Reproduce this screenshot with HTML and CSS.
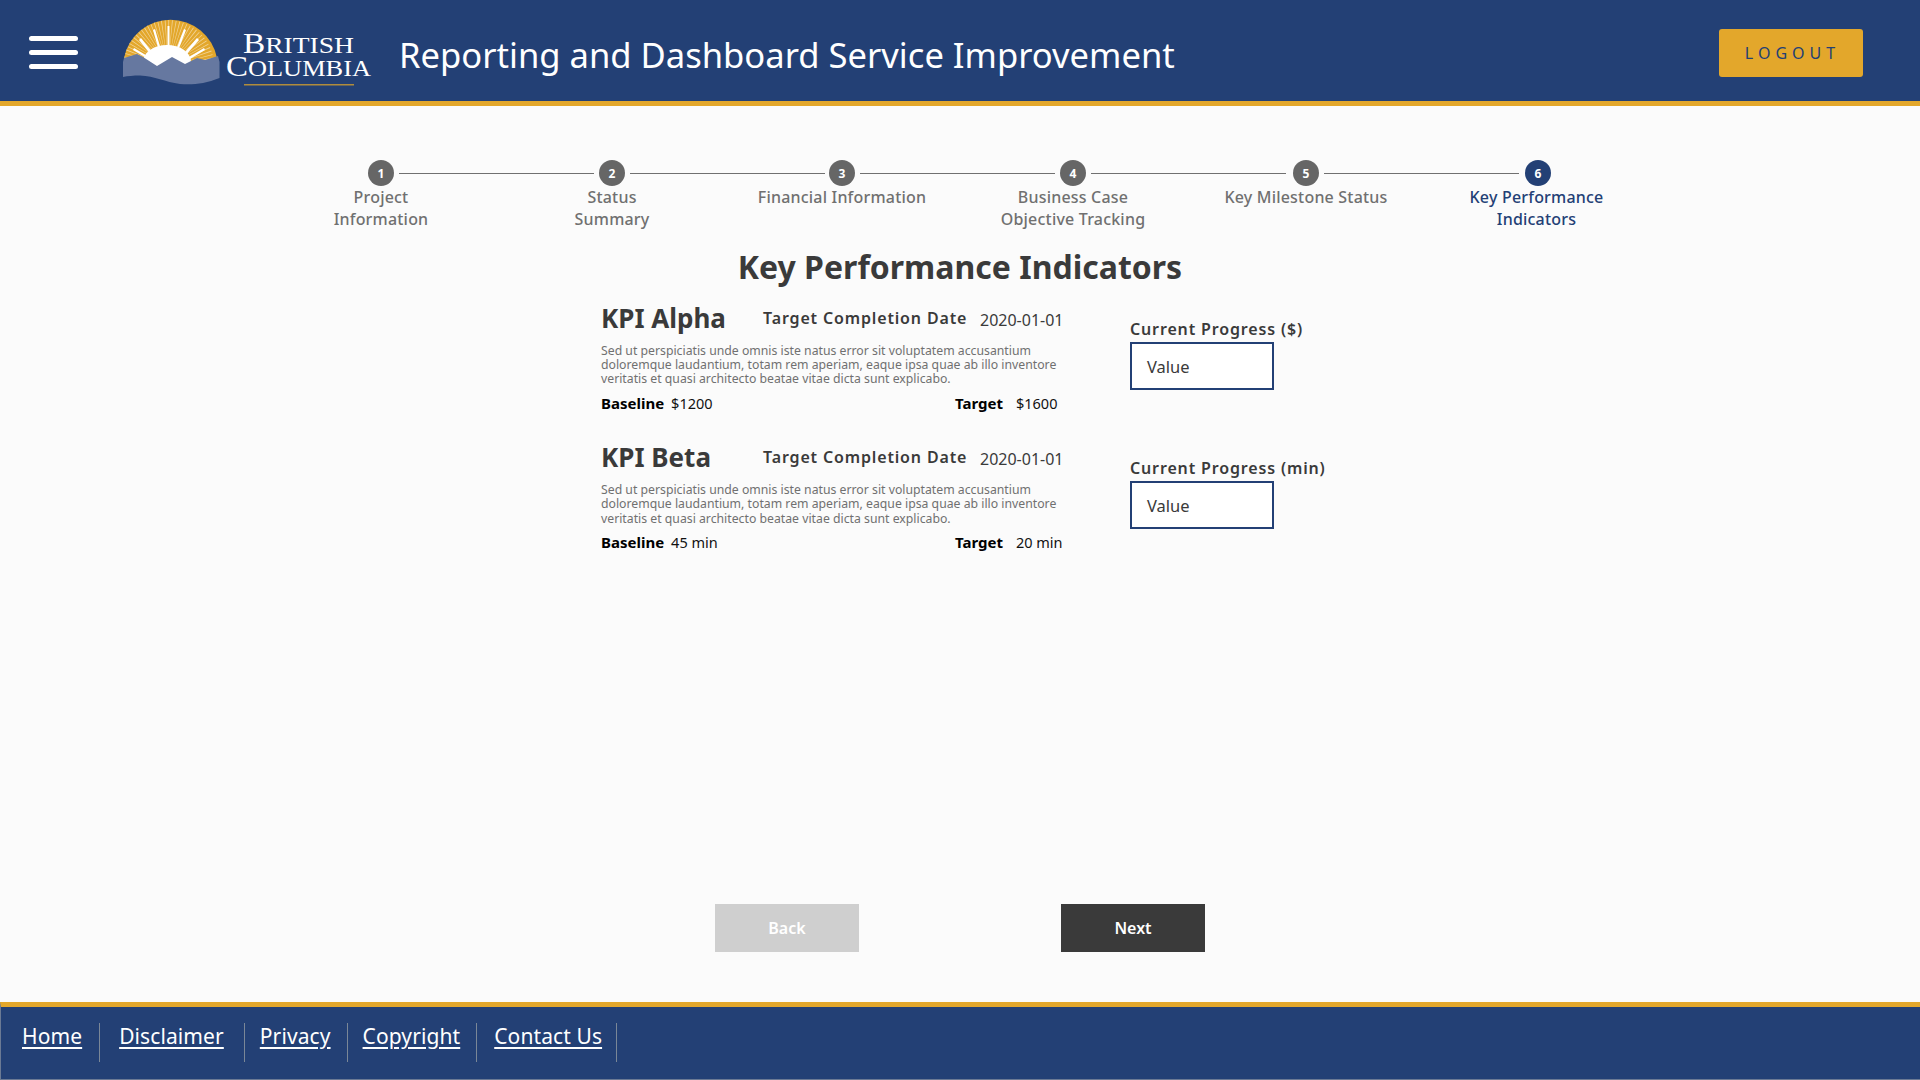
FILE: index.html
```html
<!DOCTYPE html>
<html lang="en">
<head>
<meta charset="utf-8">
<title>Reporting and Dashboard Service Improvement</title>
<link rel="stylesheet" href="styles.css">
</head>
<body>
<div class="page">
  <header class="header">
    <div class="menu" aria-label="Menu"><span></span><span></span><span></span></div>
    <svg class="logo" viewBox="120 15 260 75" width="260" height="75" aria-label="British Columbia">
      <defs><clipPath id="dome"><path d="M124 58 A47.4 47.4 0 0 1 217 58 L217 66 L124 66 Z"/></clipPath></defs>
      <path d="M124 58 A47.4 47.4 0 0 1 217 58 L217 66 L124 66 Z" fill="#e3a72b"/>
      <g clip-path="url(#dome)">
        <circle cx="168" cy="66" r="32" fill="none" stroke="#fff" stroke-width="28" stroke-dasharray="0.6 2" opacity=".5"/>
        <g fill="#fff">
          <path d="M167.500 26 L169.500 26 L169.500 50 L167.500 50 Z"/>
          <path d="M153 30 L155 29 L161 50 L159 51 Z"/>
          <path d="M184 29 L186 30 L178 51 L176 50 Z"/>
          <path d="M139 40 L141 38 L153 53 L151 55 Z"/>
          <path d="M197 38 L199 40 L186 55 L184 53 Z"/>
          <path d="M133 50 L134 48 L149 57 L148 59 Z"/>
          <path d="M204 48 L205 50 L190 59 L189 57 Z"/>
        </g>
      </g>
      <ellipse cx="167" cy="62" rx="24" ry="17" fill="#fff"/>
      <path d="M123 62 L124 58 L137 54 L143 57 L157 66 L172 57 L185 64 L197 58 L205 60 L218 56 L219.500 62 L219.500 78 C205 84 192 85 180 84 C165 82 155 76 140 75.500 C133 75.500 128 76 123 77 Z" fill="#6678a0"/>
      <text class="logo-text" x="243" y="52.500" textLength="111" lengthAdjust="spacingAndGlyphs"><tspan class="logo-cap">B</tspan>RITISH</text>
      <text class="logo-text" x="226" y="76" textLength="145" lengthAdjust="spacingAndGlyphs"><tspan class="logo-cap logo-cap-c">C</tspan>OLUMBIA</text>
      <rect x="244" y="84" width="110" height="1.500" fill="#b08c3c"/>
    </svg>
    <h1 class="app-title">Reporting and Dashboard Service Improvement</h1>
    <a class="logout">LOGOUT</a>
  </header>

  <main class="main">
    <ol class="stepper">
      <li class="step"><span class="dot">1</span><span class="step-label">Project<br>Information</span></li>
      <li class="step"><span class="dot">2</span><span class="step-label">Status<br>Summary</span></li>
      <li class="step"><span class="dot">3</span><span class="step-label">Financial Information</span></li>
      <li class="step"><span class="dot">4</span><span class="step-label">Business Case<br>Objective Tracking</span></li>
      <li class="step"><span class="dot">5</span><span class="step-label">Key Milestone Status</span></li>
      <li class="step current"><span class="dot">6</span><span class="step-label">Key Performance<br>Indicators</span></li>
    </ol>

    <h2 class="page-title">Key Performance Indicators</h2>

    <section class="kpi-list">
      <article class="kpi">
        <div class="kpi-info">
          <div class="kpi-head">
            <h3 class="kpi-name">KPI Alpha</h3>
            <span class="kpi-date-label">Target Completion Date</span>
            <span class="kpi-date">2020-01-01</span>
          </div>
          <p class="kpi-desc">Sed ut perspiciatis unde omnis iste natus error sit voluptatem accusantium doloremque laudantium, totam rem aperiam, eaque ipsa quae ab illo inventore veritatis et quasi architecto beatae vitae dicta sunt explicabo.</p>
          <div class="kpi-values">
            <span class="kpi-pair kpi-baseline"><b>Baseline</b> <span>$1200</span></span>
            <span class="kpi-pair kpi-target"><b>Target</b> <span>$1600</span></span>
          </div>
        </div>
        <label class="kpi-field">
          <span class="field-label">Current Progress ($)</span>
          <span class="field-box">Value</span>
        </label>
      </article>
      <article class="kpi">
        <div class="kpi-info">
          <div class="kpi-head">
            <h3 class="kpi-name">KPI Beta</h3>
            <span class="kpi-date-label">Target Completion Date</span>
            <span class="kpi-date">2020-01-01</span>
          </div>
          <p class="kpi-desc">Sed ut perspiciatis unde omnis iste natus error sit voluptatem accusantium doloremque laudantium, totam rem aperiam, eaque ipsa quae ab illo inventore veritatis et quasi architecto beatae vitae dicta sunt explicabo.</p>
          <div class="kpi-values">
            <span class="kpi-pair kpi-baseline"><b>Baseline</b> <span>45 min</span></span>
            <span class="kpi-pair kpi-target"><b>Target</b> <span>20 min</span></span>
          </div>
        </div>
        <label class="kpi-field">
          <span class="field-label">Current Progress (min)</span>
          <span class="field-box">Value</span>
        </label>
      </article>
    </section>

    <div class="actions">
      <button class="btn btn-back">Back</button>
      <button class="btn btn-next">Next</button>
    </div>
  </main>

  <footer class="footer">
    <nav class="footer-nav">
      <a class="f-home">Home</a>
      <a class="f-disclaimer">Disclaimer</a>
      <a class="f-privacy">Privacy</a>
      <a class="f-copyright">Copyright</a>
      <a class="f-contact">Contact Us</a>
    </nav>
  </footer>
</div>
</body>
</html>
```
FILE: styles.css
```css
* { box-sizing: border-box; }
html, body { margin: 0; padding: 0; }
body {
  font-family: "Noto Sans", "Open Sans", sans-serif;
  background: #fbfbfb;
  color: #3a3a3a;
}
.page {
  height: 1080px;
  display: flex;
  flex-direction: column;
}

/* Header */
.header {
  height: 106px;
  flex: none;
  background: #234075;
  border-bottom: 5px solid #e3a72b;
  display: flex;
  align-items: center;
  padding: 0 57px 0 29px;
}
.menu {
  width: 49px;
  display: flex;
  flex-direction: column;
  gap: 9px;
  margin-top: 4px;
  flex: none;
}
.menu span {
  display: block;
  height: 5px;
  border-radius: 3px;
  background: #fff;
}
.logo { flex: none; margin: 4px 0 0 42px; }
.logo-text {
  font-family: "Liberation Serif", serif;
  font-size: 24px;
  fill: #fff;
}
.logo-cap { font-size: 29px; }
.logo-cap-c { font-size: 30px; }
.app-title {
  margin: 8px 0 0 19px;
  font-size: 34.6px;
  font-weight: 400;
  color: #fff;
  line-height: 50px;
  flex: 1;
  white-space: nowrap;
}
.logout {
  width: 144px;
  height: 48px;
  margin-top: 5px;
  padding-left: 3px;
  background: #e3a72b;
  color: #234075;
  border-radius: 3px;
  font-size: 16px;
  letter-spacing: 5px;
  display: flex;
  align-items: center;
  justify-content: center;
}

/* Main */
.main {
  flex: 1;
  display: flex;
  flex-direction: column;
  align-items: center;
  padding-top: 54px;
  min-height: 0;
}
.stepper {
  list-style: none;
  margin: 0 0 0 -4px;
  padding: 0;
  display: grid;
  grid-template-columns: 231px 231px 229px 233px 233px 228px;
}
.step {
  position: relative;
  display: flex;
  flex-direction: column;
  align-items: center;
  text-align: center;
  color: #707070;
}
.step:not(:last-child)::after {
  content: "";
  position: absolute;
  top: 13px;
  left: calc(50% + 18px);
  width: 195px;
  height: 1px;
  background: #707070;
}
.dot {
  width: 26px;
  height: 26px;
  border-radius: 50%;
  background: #666;
  color: #fff;
  font-size: 12px;
  font-weight: 700;
  display: flex;
  align-items: center;
  justify-content: center;
}
.step-label {
  font-size: 16px;
  line-height: 22px;
  font-weight: 500;
  letter-spacing: .2px;
  white-space: nowrap;
}
.current { color: #234075; }
.current .dot { background: #234075; margin-left: 3px; }

.page-title {
  margin: 15px 0 0;
  font-size: 32px;
  line-height: 44px;
  font-weight: 700;
  color: #3a3a3a;
}

.kpi-list {
  width: 718px;
  margin-top: 11px;
  display: flex;
  flex-direction: column;
  gap: 25.6px;
}
.kpi { display: flex; }
.kpi-info { width: 529px; flex: none; }
.kpi-head { display: flex; align-items: flex-end; }
.kpi-name {
  margin: 0;
  width: 162px;
  font-size: 26px;
  line-height: 36px;
  font-weight: 700;
  color: #3a3a3a;
}
.kpi-date-label {
  font-size: 16px;
  font-weight: 600;
  letter-spacing: .85px;
  line-height: 22px;
  width: 217px;
  margin-bottom: 7px;
}
.kpi-date { font-size: 16px; line-height: 22px; margin-bottom: 5px; }
.kpi-desc {
  margin: 8px 0 0;
  width: 475px;
  font-size: 12.25px;
  line-height: 14.2px;
  color: #707070;
}
.kpi-values {
  margin-top: 5px;
  display: flex;
  font-size: 14.5px;
  line-height: 22px;
  color: #111;
}
.kpi-pair { display: flex; gap: 7px; align-items: baseline; }
.kpi-pair b { font-weight: 700; color: #000; font-size: 15px; }
.kpi-baseline { width: 354px; }
.kpi-target { gap: 13px; }

.kpi-field { display: flex; flex-direction: column; margin-top: 18px; }
.field-label {
  font-size: 16px;
  font-weight: 600;
  letter-spacing: .85px;
  line-height: 22px;
  white-space: nowrap;
}
.field-box {
  width: 144px;
  height: 48px;
  margin-top: 2px;
  border: 2px solid #234075;
  background: #fff;
  padding-left: 15px;
  font-size: 16.5px;
  display: flex;
  align-items: center;
}

.actions {
  margin-top: auto;
  margin-bottom: 50px;
  width: 490px;
  display: flex;
  justify-content: space-between;
}
.btn {
  width: 144px;
  height: 48px;
  border: 0;
  font-family: inherit;
  font-size: 16px;
  font-weight: 600;
  color: #fff;
}
.btn-back { background: #cfcfcf; }
.btn-next { background: #3a3a3a; }

/* Footer */
.footer {
  height: 78px;
  flex: none;
  background: #234075;
  border-top: 5px solid #e3a72b;
  border-left: 1px solid #6b7a94;
  border-bottom: 1px solid #6b7a94;
  padding: 16px 0 0 21px;
}
.footer-nav { display: flex; align-items: flex-start; }
.footer-nav a {
  color: #fff;
  font-size: 21px;
  letter-spacing: .1px;
  line-height: 27px;
  text-decoration: underline;
  text-underline-offset: 3px;
  position: relative;
}
.footer-nav a::after {
  content: "";
  position: absolute;
  top: 0;
  right: -17px;
  width: 1px;
  height: 39px;
  background: #7a8797;
}
.f-home { margin-right: 37px; }
.f-disclaimer { margin-right: 36px; }
.f-privacy { margin-right: 32px; }
.f-copyright { margin-right: 34px; }
.footer-nav .f-home::after { right: -18px; }
.footer-nav .f-disclaimer::after { right: -21px; }
.footer-nav .f-contact::after { right: -15px; }
```
